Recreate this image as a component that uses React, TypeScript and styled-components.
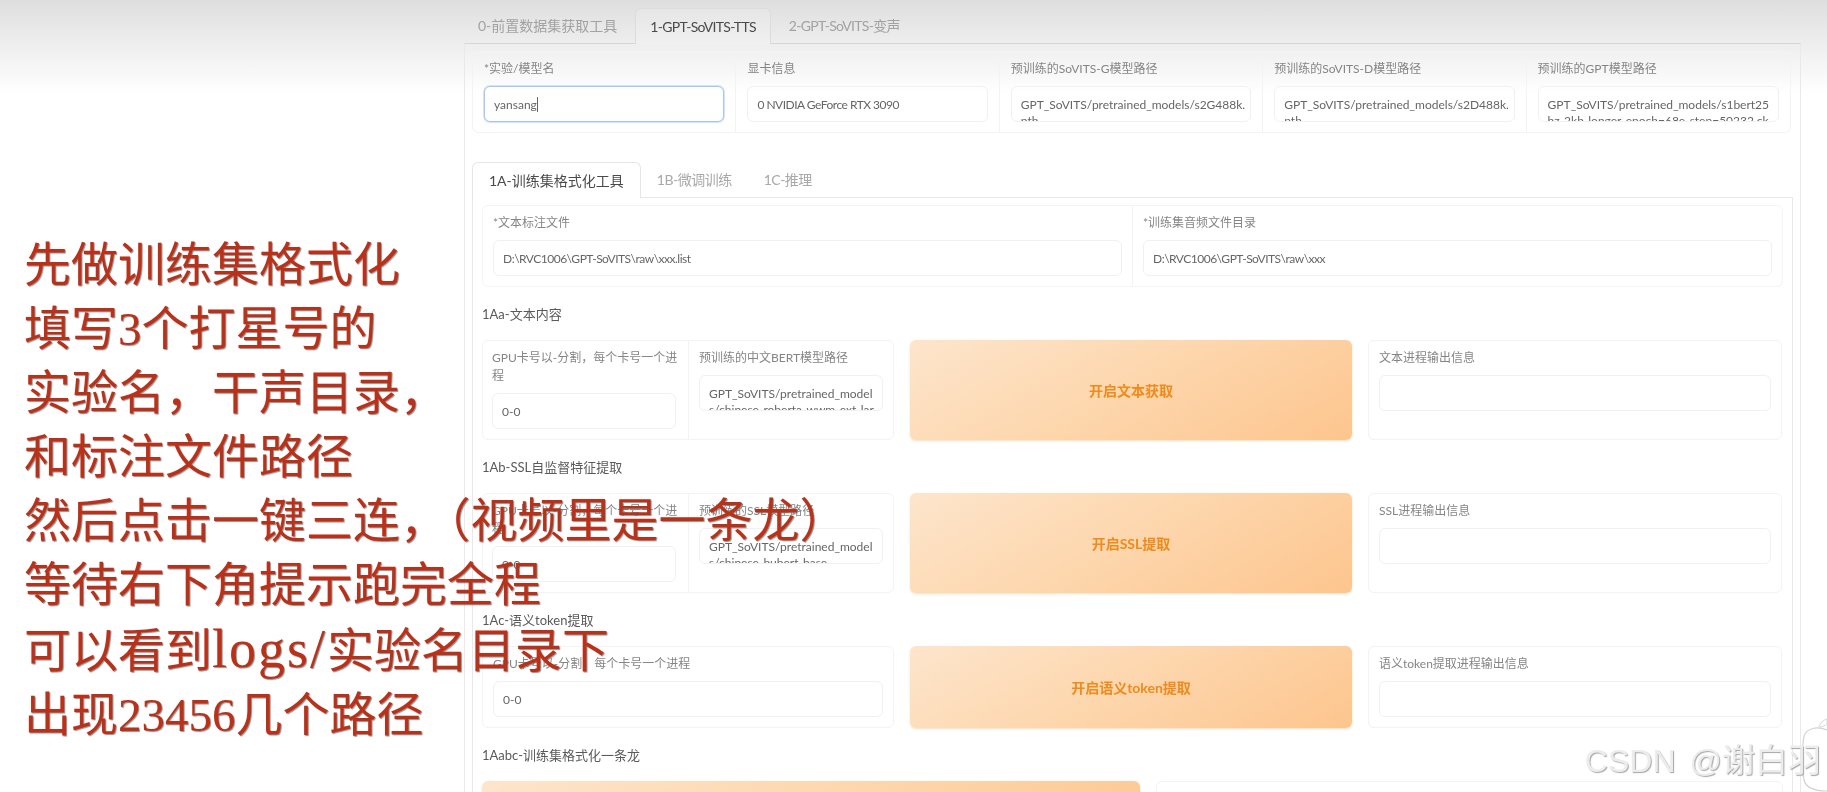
import styled, { createGlobalStyle } from "styled-components";

const GlobalStyle = createGlobalStyle`
  html, body {
    margin: 0;
    padding: 0;
    background: #fff;
  }
`;

const Page = styled.div`
  position: relative;
  display: flex;
  width: 1827px;
  height: 792px;
  overflow: hidden;
  background: linear-gradient(180deg, #dedede 0, #f0f0f0 50px, #fff 94px);
  font-family: "Lato", "Noto Sans CJK SC", sans-serif;
  filter: blur(0.45px);
`;

const Caption = styled.div`
  position: relative;
  z-index: 2;
  flex: 0 0 464px;
  min-width: 0;
  box-sizing: border-box;
  padding: 233px 0 0 24px;
  font-family: "Liberation Serif", "Noto Sans CJK SC", serif;
  font-size: 47px;
  line-height: 64px;
  color: #bb3018;
  white-space: nowrap;
  text-shadow: 1px 1px 1px rgba(105, 105, 105, 0.75);
  pointer-events: none;
`;

const Wide = styled.span`
  font-size: 54px;
  letter-spacing: 2px;
`;

const Main = styled.div`
  display: flex;
  flex-direction: column;
  width: 1337px;
  padding-top: 8px;
`;

const TopTabs = styled.div`
  display: flex;
  height: 35px;
`;

const TopTab = styled.div<{ $active?: boolean; $tight?: boolean; $first?: boolean }>`
  position: relative;
  z-index: 1;
  box-sizing: border-box;
  height: ${(p) => (p.$active ? "36px" : "35px")};
  margin-bottom: -1px;
  padding: 0 ${(p) => (p.$first ? "18px" : "14px")} 0 ${(p) => (p.$active || p.$first ? "14px" : "18px")};
  font-size: 14px;
  line-height: 35px;
  letter-spacing: ${(p) => (p.$tight ? "-0.7px" : "0")};
  color: ${(p) => (p.$active ? "#4a4a4a" : "#a2a2a2")};
  ${(p) =>
    p.$active &&
    `
    background: linear-gradient(180deg, #e6e6e6, #f0f0f0);
    border: 1px solid #dcdcdc;
    border-bottom: 0;
    border-radius: 6px 6px 0 0;
  `}
`;

const TopPanel = styled.div`
  box-sizing: border-box;
  flex: 1;
  width: 1337px;
  padding: 7px 8px 0 7px;
  border: 1px solid #e9e9e9;
  border-top-color: #d6d6d6;
  border-bottom: 0;
`;

const ModelRow = styled.div`
  display: grid;
  grid-template-columns: repeat(5, 1fr);
  width: 1319px;
  box-sizing: border-box;
  border: 1px solid #f3f3f3;
  border-radius: 6px;
`;

const Field = styled.div<{ $noRule?: boolean }>`
  box-sizing: border-box;
  min-width: 0;
  padding: 8px 10px 10px;
  border-right: ${(p) => (p.$noRule ? "0" : "1px solid #f3f3f3")};
`;

const ModelField = styled(Field)`
  padding-inline: 11px;
`;

const Label = styled.div`
  font-size: 12px;
  line-height: 18px;
  color: #858585;
  margin-bottom: 8px;
`;

const Input = styled.div<{ $focused?: boolean; $tight?: boolean }>`
  box-sizing: border-box;
  height: 36px;
  padding: 10px 3px 0 9px;
  overflow: hidden;
  font-size: 12px;
  line-height: 16px;
  letter-spacing: ${(p) => (p.$tight ? "-0.5px" : "0")};
  color: #666;
  word-break: break-all;
  background: ${(p) => (p.$focused ? "#fff" : "rgba(255, 255, 255, 0.65)")};
  border: 1px solid ${(p) => (p.$focused ? "#a8c6ee" : "#f1f1f1")};
  border-radius: 6px;
  box-shadow: ${(p) => (p.$focused ? "0 0 0 1px #d6e4f7" : "none")};
`;

const PretrainedInput = styled(Input)`
  padding-right: 8px;
`;

const Caret = styled.span`
  display: inline-block;
  width: 1px;
  height: 15px;
  margin-bottom: -3px;
  background: #666;
`;

const SubTabs = styled.div`
  display: flex;
  height: 35px;
  margin-top: 29px;
`;

const SubTab = styled.div<{ $active?: boolean }>`
  position: relative;
  z-index: 1;
  box-sizing: border-box;
  height: ${(p) => (p.$active ? "36px" : "35px")};
  margin-bottom: -1px;
  padding: 0 16px;
  font-size: 14px;
  line-height: 35px;
  letter-spacing: ${(p) => (p.$active ? "0" : "-0.5px")};
  color: ${(p) => (p.$active ? "#4a4a4a" : "#a8a8a8")};
  ${(p) =>
    p.$active &&
    `
    background: #fff;
    border: 1px solid #e6e6e6;
    border-bottom: 0;
    border-radius: 6px 6px 0 0;
  `}
`;

const SubPanel = styled.div`
  box-sizing: border-box;
  width: 1321px;
  padding: 7px 9px 0;
  border: 1px solid #e8e8e8;
  border-bottom: 0;
`;

const PathRow = styled.div`
  display: grid;
  grid-template-columns: 650px 1fr;
  width: 1301px;
  box-sizing: border-box;
  border: 1px solid #f4f4f4;
  border-radius: 6px;
`;

const Heading = styled.div`
  margin: 17px 0 16px;
  font-size: 13px;
  line-height: 20px;
  color: #5a5a5a;
`;

const StepRow = styled.div<{ $columns?: string }>`
  display: grid;
  grid-template-columns: ${(p) => p.$columns || "412px 442px 414px"};
  column-gap: 16px;
  width: 1301px;
`;

const Card = styled.div<{ $split?: boolean }>`
  box-sizing: border-box;
  display: grid;
  grid-template-columns: ${(p) => (p.$split ? "206px 1fr" : "1fr")};
  border: 1px solid #f3f3f3;
  border-radius: 6px;
`;

const FirstField = styled(Field)`
  padding-left: 9px;
  padding-right: 12px;

  ${Label} {
    margin-right: -5px;
  }
`;

const RunButton = styled.div`
  display: flex;
  align-items: center;
  justify-content: center;
  font-size: 14px;
  font-weight: 700;
  color: #ef8a1c;
  background: linear-gradient(150deg, #fde5cc 0%, #fdd6ac 50%, #fdc58e 100%);
  border-radius: 6px;
  box-shadow: 0 1px 2px rgba(240, 190, 130, 0.5);
`;

const Watermark = styled.div`
  position: absolute;
  z-index: 4;
  right: 6px;
  bottom: 13px;
  display: flex;
  align-items: center;
  gap: 14px;
  font-family: "Liberation Sans", "Noto Sans CJK SC", sans-serif;
  font-size: 32px;
  line-height: 36px;
  color: #ececec;
  text-shadow: 1px 1px 1px #a6a6a6;
  white-space: nowrap;
`;

const CornerBadge = styled.svg`
  position: absolute;
  z-index: 3;
  right: 0;
  bottom: 0;
`;

const Name = styled.span`
  font-size: 33px;
`;

const modelFields = [
  { label: "预训练的SoVITS-G模型路径", value: "GPT_SoVITS/pretrained_models/s2G488k.pth" },
  { label: "预训练的SoVITS-D模型路径", value: "GPT_SoVITS/pretrained_models/s2D488k.pth" },
  {
    label: "预训练的GPT模型路径",
    value: "GPT_SoVITS/pretrained_models/s1bert25hz-2kh-longer-epoch=68e-step=50232.ckpt",
  },
];

const gpuLabel = "GPU卡号以-分割，每个卡号一个进程";

function OutputCard({ label }: { label: string }) {
  return (
    <Card>
      <Field $noRule>
        <Label>{label}</Label>
        <Input />
      </Field>
    </Card>
  );
}

function SplitStep({
  pretrainedLabel,
  pretrainedPath,
  button,
  output,
}: {
  pretrainedLabel: string;
  pretrainedPath: string;
  button: string;
  output: string;
}) {
  return (
    <StepRow>
      <Card $split>
        <FirstField>
          <Label>{gpuLabel}</Label>
          <Input>0-0</Input>
        </FirstField>
        <Field $noRule>
          <Label>{pretrainedLabel}</Label>
          <PretrainedInput>{pretrainedPath}</PretrainedInput>
        </Field>
      </Card>
      <RunButton>{button}</RunButton>
      <OutputCard label={output} />
    </StepRow>
  );
}

export default function App() {
  return (
    <Page>
      <GlobalStyle />
      <Caption>
        先做训练集格式化
        <br />
        填写3个打星号的
        <br />
        实验名，干声目录，
        <br />
        和标注文件路径
        <br />
        然后点击一键三连，（视频里是一条龙）
        <br />
        等待右下角提示跑完全程
        <br />
        可以看到<Wide>logs/</Wide>实验名目录下
        <br />
        出现23456几个路径
      </Caption>

      <Main>
        <TopTabs>
          <TopTab $first>0-前置数据集获取工具</TopTab>
          <TopTab $active $tight>
            1-GPT-SoVITS-TTS
          </TopTab>
          <TopTab $tight>2-GPT-SoVITS-变声</TopTab>
        </TopTabs>

        <TopPanel>
          <ModelRow>
            <ModelField>
              <Label>*实验/模型名</Label>
              <Input $focused>
                yansang
                <Caret />
              </Input>
            </ModelField>
            <ModelField>
              <Label>显卡信息</Label>
              <Input $tight>0 NVIDIA GeForce RTX 3090</Input>
            </ModelField>
            {modelFields.map((f, i) => (
              <ModelField key={f.label} $noRule={i === modelFields.length - 1}>
                <Label>{f.label}</Label>
                <Input>{f.value}</Input>
              </ModelField>
            ))}
          </ModelRow>

          <SubTabs>
            <SubTab $active>1A-训练集格式化工具</SubTab>
            <SubTab>1B-微调训练</SubTab>
            <SubTab>1C-推理</SubTab>
          </SubTabs>

          <SubPanel>
            <PathRow>
              <Field>
                <Label>*文本标注文件</Label>
                <Input $tight>D:\RVC1006\GPT-SoVITS\raw\xxx.list</Input>
              </Field>
              <Field $noRule>
                <Label>*训练集音频文件目录</Label>
                <Input $tight>D:\RVC1006\GPT-SoVITS\raw\xxx</Input>
              </Field>
            </PathRow>

            <Heading>1Aa-文本内容</Heading>
            <SplitStep
              pretrainedLabel="预训练的中文BERT模型路径"
              pretrainedPath="GPT_SoVITS/pretrained_models/chinese-roberta-wwm-ext-large"
              button="开启文本获取"
              output="文本进程输出信息"
            />

            <Heading>1Ab-SSL自监督特征提取</Heading>
            <SplitStep
              pretrainedLabel="预训练的SSL模型路径"
              pretrainedPath="GPT_SoVITS/pretrained_models/chinese-hubert-base"
              button="开启SSL提取"
              output="SSL进程输出信息"
            />

            <Heading>1Ac-语义token提取</Heading>
            <StepRow>
              <Card>
                <Field $noRule>
                  <Label>{gpuLabel}</Label>
                  <Input>0-0</Input>
                </Field>
              </Card>
              <RunButton>开启语义token提取</RunButton>
              <OutputCard label="语义token提取进程输出信息" />
            </StepRow>

            <Heading>1Aabc-训练集格式化一条龙</Heading>
            <StepRow $columns="658px 1fr">
              <RunButton>开启一键三连</RunButton>
              <OutputCard label="一键三连进程输出信息" />
            </StepRow>
          </SubPanel>
        </TopPanel>
      </Main>

      <CornerBadge width="26" height="74" viewBox="0 0 26 74">
        <path
          d="M26 12 C16 8 6 10 3 18 C1 30 1 50 3 62 C5 70 14 73 26 73"
          fill="#fff"
          stroke="#d2d2d2"
          strokeWidth="1.2"
        />
        <path d="M26 1 C22 2 19 5 18 9 C21 9 24 8 26 6 Z" fill="#fff" stroke="#d8d8d8" />
      </CornerBadge>
      <Watermark>
        <span>CSDN</span>
        <span>
          @<Name>谢白羽</Name>
        </span>
      </Watermark>
    </Page>
  );
}
